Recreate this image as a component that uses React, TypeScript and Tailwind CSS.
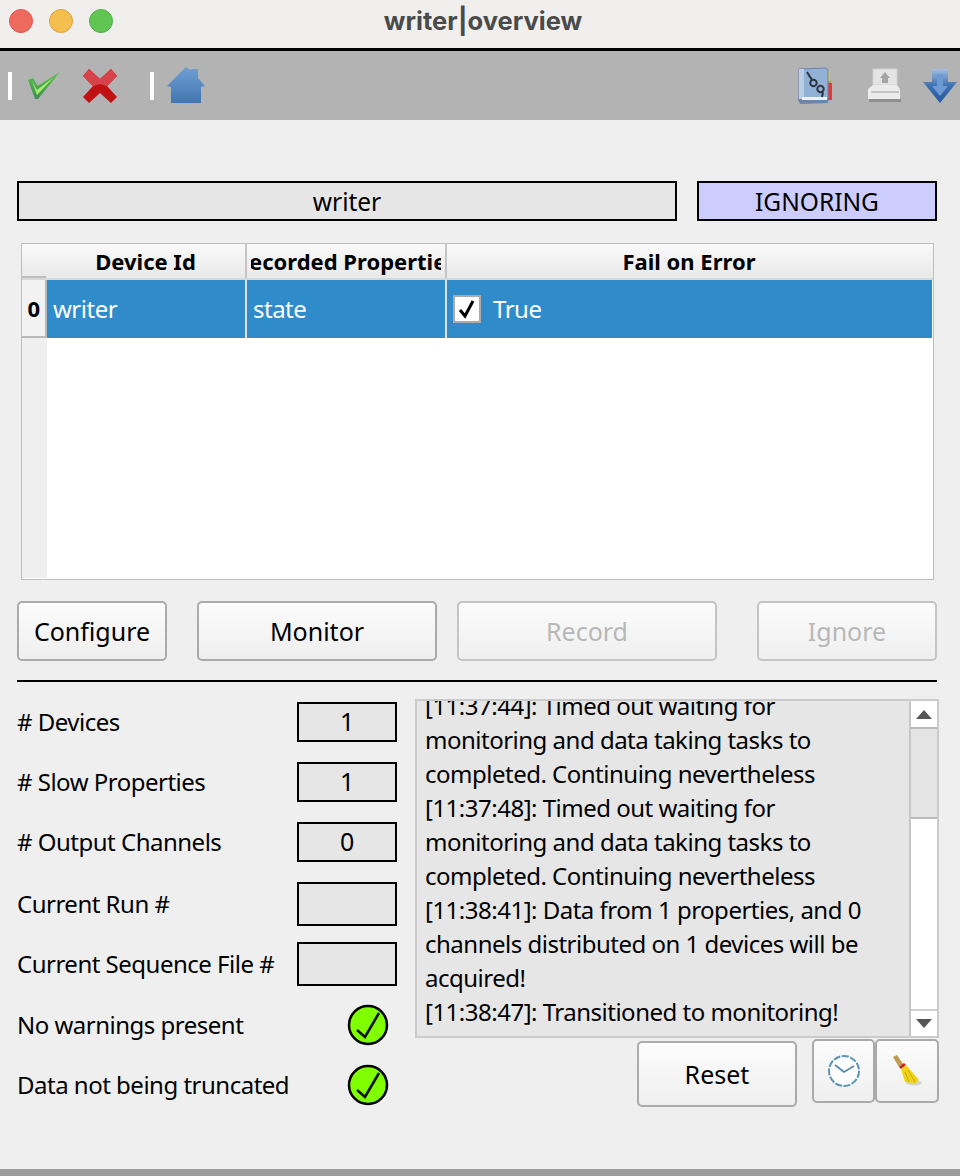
const stats = [
  { label: "# Devices", value: "1", box: "h-[40px]", gap: "mb-[20px]" },
  { label: "# Slow Properties", value: "1", box: "h-[40px]", gap: "mb-[20px]" },
  { label: "# Output Channels", value: "0", box: "h-[40px]", gap: "mb-[20px]" },
  { label: "Current Run #", value: "", box: "h-[44px]", gap: "mb-[16px]" },
  { label: "Current Sequence File #", value: "", box: "h-[44px]", gap: "mb-[16px]" },
];

const checks = ["No warnings present", "Data not being truncated"];

const logLines = [
  "[11:37:44]: Timed out waiting for",
  "monitoring and data taking tasks to",
  "completed. Continuing nevertheless",
  "[11:37:48]: Timed out waiting for",
  "monitoring and data taking tasks to",
  "completed. Continuing nevertheless",
  "[11:38:41]: Data from 1 properties, and 0",
  "channels distributed on 1 devices will be",
  "acquired!",
  "[11:38:47]: Transitioned to monitoring!",
];

function CheckIcon() {
  return (
    <svg width="32" height="27" viewBox="0 0 32 27">
      <defs>
        <linearGradient id="chk" x1="0" y1="0" x2="0" y2="1">
          <stop offset="0" stopColor="#5cc24a" />
          <stop offset="1" stopColor="#3f8f5a" />
        </linearGradient>
      </defs>
      <path d="M0 8 L5 6 L9.5 14 L32 0 L10 27 L7 27 Z" fill="url(#chk)" />
      <path d="M4 9 L9 18 L26 5 L9 23 Z" fill="#a6ee6c" />
    </svg>
  );
}

function CrossIcon() {
  return (
    <svg width="34" height="36" viewBox="0 0 34 36">
      <path d="M6 1 L17 11 L28 1 L34 8 L24 18 L34 29 L28 35 L17 25 L6 35 L0 29 L10 18 L0 8 Z" fill="#c01212" />
      <path d="M6 1 L17 11 L28 1 L34 8 L24 18 L17 16 L10 18 L0 8 Z" fill="#d8434b" />
    </svg>
  );
}

function HomeIcon() {
  return (
    <svg width="38" height="38" viewBox="0 0 38 38">
      <defs>
        <linearGradient id="home" x1="0" y1="0" x2="0" y2="1">
          <stop offset="0" stopColor="#6f9fd3" />
          <stop offset="1" stopColor="#4276b2" />
        </linearGradient>
      </defs>
      <path d="M0 19 L19 0 L23 3 L26 2 L31 2 L31 11 L38 19 L34 20 L34 36 L4 36 L4 20 Z" fill="url(#home)" />
    </svg>
  );
}

function LogBookIcon() {
  return (
    <svg width="36" height="38" viewBox="0 0 36 38">
      <rect x="29" y="4" width="3" height="10" fill="#d8c83a" />
      <rect x="29" y="14" width="4" height="8" fill="#a8a84a" />
      <rect x="29" y="16" width="5" height="17" fill="#e23a3a" />
      <path d="M1 2 L28 1 L30 3 L30 34 L1 34 Z" fill="#92b1d6" stroke="#6d83a6" strokeWidth="1" />
      <rect x="1" y="2" width="5" height="30" fill="#b9cde5" />
      <path d="M0 32 L30 32 L30 36 L2 37 Z" fill="#6f84a8" />
      <rect x="4" y="30" width="25" height="3" fill="#eef2f6" />
      <path d="M9 5 L14 13 M13 14 a3 3 0 1 0 5 4 a3 3 0 1 0 -5 -4 M20 20 a3 3 0 1 0 5 4 a3 3 0 1 0 -5 -4 M25 25 L24 30" stroke="#2c3440" strokeWidth="2" fill="none" />
    </svg>
  );
}

function PrinterIcon() {
  return (
    <svg width="36" height="36" viewBox="0 0 36 36">
      <rect x="6" y="1" width="24" height="16" fill="#e4e4e4" stroke="#d2d2d2" />
      <path d="M18 4 L23 10 L21 10 L21 15 L15 15 L15 10 L13 10 Z" fill="#a5a5a5" />
      <path d="M6 17 L30 17 L33 21 L33 31 L1 31 L1 21 Z" fill="#ececec" />
      <rect x="4" y="23" width="28" height="2" fill="#c4c4c4" />
      <rect x="2" y="31" width="32" height="3" fill="#8f8f8f" />
    </svg>
  );
}

function DownIcon() {
  return (
    <svg width="36" height="36" viewBox="0 0 36 36">
      <defs>
        <linearGradient id="down" x1="0" y1="0" x2="0" y2="1">
          <stop offset="0" stopColor="#a2c0e2" />
          <stop offset="0.5" stopColor="#3d6fb0" />
          <stop offset="1" stopColor="#245a9e" />
        </linearGradient>
      </defs>
      <path d="M10 1 L26 1 L26 14 L35 14 L18 35 L1 14 L10 14 Z" fill="url(#down)" />
      <path d="M15 6 L21 6 L21 18 L26 18 L18 28 L10 18 L15 18 Z" fill="#6d9ad2" />
    </svg>
  );
}

function ClockIcon() {
  return (
    <svg width="34" height="34" viewBox="0 0 34 34">
      <circle cx="17" cy="17" r="15" fill="#fff" stroke="#5b93b5" strokeWidth="2" strokeDasharray="7 1.5" />
      <path d="M8 11 L17 18 L27 12" fill="none" stroke="#4f88ad" strokeWidth="1.6" />
    </svg>
  );
}

function BroomIcon() {
  return (
    <svg width="32" height="34" viewBox="0 0 32 34">
      <ellipse cx="23" cy="29" rx="8" ry="2.5" fill="#d4d4d4" />
      <path d="M2 3 L6 1 L12 10 L8 13 Z" fill="#c09a4e" />
      <path d="M8 13 L13 9 L15 11 L10 15 Z" fill="#c8241c" />
      <path d="M10 15 L15 11 L28 26 L24 30 L14 28 Z" fill="#f0d417" />
      <path d="M14 18 L18 28 M17 16 L24 28" stroke="#c9a90f" strokeWidth="1" />
    </svg>
  );
}

function GreenCheck() {
  return (
    <svg width="42" height="42" viewBox="0 0 42 42">
      <circle cx="21" cy="21" r="19" fill="#7fff00" stroke="#000" strokeWidth="2.5" />
      <path d="M10 26 L18 33 L32 9" fill="none" stroke="#111" strokeWidth="2.6" />
    </svg>
  );
}

function QtButton({ label, width, disabled }: { label: string; width: string; disabled?: boolean }) {
  return (
    <button
      className={`${width} h-[60px] rounded-[5px] border-2 bg-gradient-to-b from-[#fcfcfc] to-[#efefef] pt-[2px] text-[25px] ${
        disabled ? "border-[#c4c4c4] text-[#b8b8b8]" : "border-[#aaaaaa] text-black"
      }`}
    >
      {label}
    </button>
  );
}

export default function App() {
  return (
    <div
      className="flex h-[1176px] w-[960px] flex-col overflow-hidden bg-[#efefef] text-black"
      style={{ fontFamily: '"Noto Sans", sans-serif' }}
    >
      {/* Window title */}
      <div className="relative flex h-[48px] items-center justify-center bg-[#f0efee] pb-[6px]">
        <div className="absolute left-[9px] top-[9px] flex gap-[16px]">
          <span className="h-[24px] w-[24px] rounded-full border border-[#e0564e] bg-[#ee6a5f]" />
          <span className="h-[24px] w-[24px] rounded-full border border-[#dea33d] bg-[#f5bf4f]" />
          <span className="h-[24px] w-[24px] rounded-full border border-[#52b044] bg-[#61c554]" />
        </div>
        <span className="pl-[6px] font-[Inter] text-[25.5px] font-bold text-[#4a4a4a]">writer|overview</span>
      </div>
      <div className="h-[3px] bg-black" />

      {/* Toolbar */}
      <div className="flex h-[69px] items-center bg-[#b3b3b3] pl-[8px] pr-[2px]">
        <span className="h-[28px] w-[4px] bg-white" />
        <span className="ml-[16px]"><CheckIcon /></span>
        <span className="ml-[23px]"><CrossIcon /></span>
        <span className="ml-[33px] h-[28px] w-[4px] bg-white" />
        <span className="ml-[13px]"><HomeIcon /></span>
        <div className="ml-auto flex items-center">
          <LogBookIcon />
          <span className="ml-[33px]"><PrinterIcon /></span>
          <span className="ml-[19px]"><DownIcon /></span>
        </div>
      </div>

      <div className="flex flex-1 flex-col px-[17px] pt-[61px]">
        {/* Name and state */}
        <div className="flex justify-between">
          <div className="flex h-[40px] w-[660px] items-center justify-center border-2 border-black bg-[#e6e6e6] pt-[2px] text-[24.5px]">
            writer
          </div>
          <div className="mr-[6px] flex h-[40px] w-[240px] items-center justify-center border-2 border-black bg-[#ccccff] pt-[2px] text-[24.5px]">
            IGNORING
          </div>
        </div>

        {/* Device table */}
        <div className="ml-[4px] mr-[9px] mt-[22px] h-[337px] border border-[#bdbdbd] bg-white">
          <div className="flex h-[34px] bg-gradient-to-b from-[#fafafa] to-[#e9e9e9] text-[22px] font-bold leading-[34px]">
            <div className="w-[24px] border-b-2 border-[#bdbdbd]" />
            <div className="w-[201px] border-r-2 border-[#c4c4c4] text-center">Device Id</div>
            <div className="w-[200px] border-r-2 border-[#c4c4c4] px-[4px]">
              <div className="flex justify-center overflow-hidden whitespace-nowrap">Recorded Properties</div>
            </div>
            <div className="flex-1 pr-[2px] text-center">Fail on Error</div>
          </div>
          <div className="flex h-[60px] border-t-2 border-[#d8d8d8] text-[24px] tracking-[-0.5px] text-white">
            <div className="flex w-[25px] items-center justify-center border-b-2 border-r-2 border-[#b8b8b8] bg-[#f2f2f2] text-[22px] font-bold text-black">
              0
            </div>
            <div className="flex w-[200px] items-center border-r-2 border-[#e0e0e0] bg-[#2f8bc9] pl-[6px]">writer</div>
            <div className="flex w-[200px] items-center border-r-2 border-[#e0e0e0] bg-[#2f8bc9] pl-[6px]">state</div>
            <div className="mr-[1px] flex flex-1 items-center bg-[#2f8bc9] pl-[6px]">
              <span className="flex h-[28px] w-[28px] items-center justify-center border-2 border-[#aaaaaa] bg-white">
                <svg width="18" height="20" viewBox="0 0 18 20">
                  <path d="M2 11 L7 17 L15 2" fill="none" stroke="#000" strokeWidth="3" />
                </svg>
              </span>
              <span className="ml-[12px]">True</span>
            </div>
          </div>
          <div className="h-[240px] w-[25px] bg-[#efefef]" />
        </div>

        {/* Actions */}
        <div className="mt-[21px] flex">
          <QtButton label="Configure" width="w-[150px]" />
          <span className="ml-[30px]"><QtButton label="Monitor" width="w-[240px]" /></span>
          <span className="ml-[20px]"><QtButton label="Record" width="w-[260px]" disabled /></span>
          <span className="ml-[40px]"><QtButton label="Ignore" width="w-[180px]" disabled /></span>
        </div>

        <div className="mr-[6px] mt-[19px] h-[2px] bg-black" />

        <div className="mt-[16px] flex">
          {/* Counters */}
          <div className="w-[398px] pt-[4px]">
            {stats.map((s) => (
              <div key={s.label} className={`flex w-[380px] items-center justify-between text-[24px] tracking-[-0.5px] ${s.gap}`}>
                <span>{s.label}</span>
                <span className={`flex w-[100px] items-center justify-center border-2 border-black bg-[#e6e6e6] text-[25px] ${s.box}`}>
                  {s.value}
                </span>
              </div>
            ))}
            <div className="flex flex-col gap-[18px] pt-[2px]">
              {checks.map((c) => (
                <div key={c} className="flex h-[42px] w-[372px] items-center justify-between text-[24px] tracking-[-0.5px]">
                  <span>{c}</span>
                  <GreenCheck />
                </div>
              ))}
            </div>
          </div>

          {/* Log */}
          <div className="w-[524px] pt-[1px]">
            <div className="flex h-[339px] border-2 border-[#cbcbcb]">
              <div className="flex w-[492px] flex-col justify-end overflow-hidden bg-[#e6e6e6] pb-[7px] pl-[8px] text-[24px] leading-[34px] tracking-[-0.5px]">
                {logLines.map((line, i) => (
                  <div key={i} className="shrink-0 whitespace-nowrap">{line}</div>
                ))}
              </div>
              <div className="flex w-[28px] flex-col border-l-2 border-[#c6c6c6] bg-white">
                <div className="flex h-[26px] items-center justify-center">
                  <svg width="16" height="9" viewBox="0 0 16 9"><path d="M8 0 L16 9 L0 9 Z" fill="#555555" /></svg>
                </div>
                <div className="h-[92px] border-y-2 border-[#bbbbbb] bg-[#e4e4e4]" />
                <div className="flex-1" />
                <div className="flex h-[27px] items-center justify-center border-t-2 border-[#d0d0d0]">
                  <svg width="16" height="9" viewBox="0 0 16 9"><path d="M0 0 L16 0 L8 9 Z" fill="#555555" /></svg>
                </div>
              </div>
            </div>
            <div className="flex items-start">
              <button className="ml-[222px] mt-[3px] h-[66px] w-[160px] rounded-[5px] border-2 border-[#aaaaaa] bg-gradient-to-b from-[#fcfcfc] to-[#efefef] pt-[2px] text-[25px]">
                Reset
              </button>
              <button className="ml-[15px] mt-[1px] flex h-[64px] w-[63px] items-center justify-center rounded-[5px] border-2 border-[#aaaaaa] bg-gradient-to-b from-[#fcfcfc] to-[#efefef]">
                <ClockIcon />
              </button>
              <button className="mt-[1px] flex h-[64px] w-[64px] items-center justify-center rounded-[5px] border-2 border-[#aaaaaa] bg-gradient-to-b from-[#fcfcfc] to-[#efefef]">
                <BroomIcon />
              </button>
            </div>
          </div>
        </div>
      </div>

      <div className="h-[7px] bg-[#9c9c9c]" />
    </div>
  );
}
